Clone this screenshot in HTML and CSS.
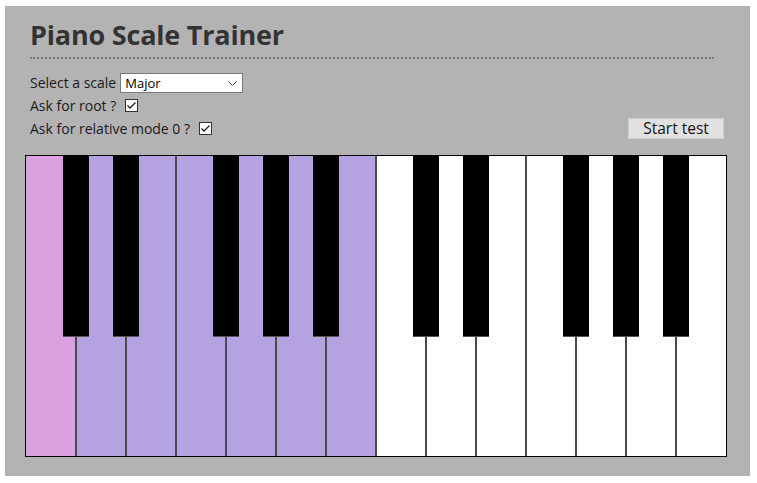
FILE: index.html
```html
<!DOCTYPE html>
<html>
<head>
<meta charset="utf-8">
<link rel="stylesheet" href="styles.css">
</head>
<body>
<div class="app">
  <h1 class="title">Piano Scale Trainer</h1>
  <div class="controls">
    <div class="options">
      <div class="row">
        <span>Select a scale</span>
        <div class="select">
          <span>Major</span>
          <svg class="chev" width="9" height="6" viewBox="0 0 9 6"><path d="M0.5 0.5 L4.5 4.5 L8.5 0.5" fill="none" stroke="#444" stroke-width="1"/></svg>
        </div>
      </div>
      <div class="row">
        <span>Ask for root ?</span>
        <span class="check"><svg width="11" height="11" viewBox="0 0 11 11"><path d="M1.5 5.5 L4 8 L9.5 2.5" fill="none" stroke="#222" stroke-width="1.3"/></svg></span>
      </div>
      <div class="row">
        <span>Ask for relative mode 0 ?</span>
        <span class="check"><svg width="11" height="11" viewBox="0 0 11 11"><path d="M1.5 5.5 L4 8 L9.5 2.5" fill="none" stroke="#222" stroke-width="1.3"/></svg></span>
      </div>
    </div>
    <button class="start">Start test</button>
  </div>
  <div class="keyboard">
    <div class="white root first"></div>
    <div class="white scale"></div>
    <div class="white scale"></div>
    <div class="white scale"></div>
    <div class="white scale"></div>
    <div class="white scale"></div>
    <div class="white scale"></div>
    <div class="white"></div>
    <div class="white"></div>
    <div class="white"></div>
    <div class="white"></div>
    <div class="white"></div>
    <div class="white"></div>
    <div class="white last"></div>
    <div class="black" style="left:37px"></div>
    <div class="black" style="left:87px"></div>
    <div class="black" style="left:187px"></div>
    <div class="black" style="left:237px"></div>
    <div class="black" style="left:287px"></div>
    <div class="black" style="left:387px"></div>
    <div class="black" style="left:437px"></div>
    <div class="black" style="left:537px"></div>
    <div class="black" style="left:587px"></div>
    <div class="black" style="left:637px"></div>
  </div>
</div>
</body>
</html>
```

FILE: styles.css
```css
html, body {
  margin: 0;
  padding: 0;
  background: #ffffff;
}
body {
  padding: 6px 7px 7px 5px;
  font-family: "Open Sans", "Noto Sans", sans-serif;
  color: #1a1a1a;
}
.app {
  background: #b3b3b3;
  height: 470px;
  box-sizing: border-box;
  padding: 10px 20px 0 20px;
}
.title {
  margin: 0 16px 0 5px;
  font-family: "Open Sans", sans-serif;
  font-weight: 700;
  font-size: 27px;
  line-height: 38px;
  color: #333333;
  letter-spacing: -0.2px;
  border-bottom: 2px dotted #7a7a7a;
  padding-bottom: 3px;
}
.controls {
  display: flex;
  justify-content: space-between;
  align-items: flex-end;
  margin: 12px 6px 0 5px;
}
.options {
  display: flex;
  flex-direction: column;
}
.row {
  display: flex;
  align-items: center;
  height: 23px;
  font-size: 14px;
  gap: 5px;
}
.select {
  position: relative;
  display: flex;
  align-items: center;
  width: 123px;
  height: 20px;
  box-sizing: border-box;
  border: 1px solid #7a7a7a;
  background: #fff;
  padding-left: 4px;
  font-size: 13px;
  color: #000;
  margin-left: -1px;
}
.chev {
  position: absolute;
  right: 5px;
  top: 7px;
}
.check {
  display: inline-flex;
  align-items: center;
  justify-content: center;
  width: 13px;
  height: 13px;
  box-sizing: border-box;
  border: 1px solid #333;
  background: #fff;
  margin-left: 4px;
}
.start {
  width: 96px;
  height: 21px;
  border: 1px solid #d0d0d0;
  background: #e1e1e1;
  font-family: "Open Sans", sans-serif;
  font-size: 15.5px;
  color: #111;
  padding: 0;
  margin-bottom: 1px;
  line-height: 19px;
}
.keyboard {
  position: relative;
  display: flex;
  margin-top: 15px;
  width: 702px;
  height: 302px;
  box-sizing: border-box;
  border: 1px solid #000;
  background: #fff;
}
.white {
  width: 50px;
  height: 300px;
  box-sizing: border-box;
  border-right: 2px solid #4a4a4a;
  background: #ffffff;
}
.white.first {
  width: 51px;
}
.white.last {
  width: 49px;
  border-right: none;
}
.white.root {
  background: #daa0e0;
}
.white.scale {
  background: #b5a2e0;
}
.black {
  position: absolute;
  top: 0;
  width: 26px;
  height: 181px;
  background: #000;
  border-bottom: 1px solid #555;
  box-sizing: border-box;
}
```
